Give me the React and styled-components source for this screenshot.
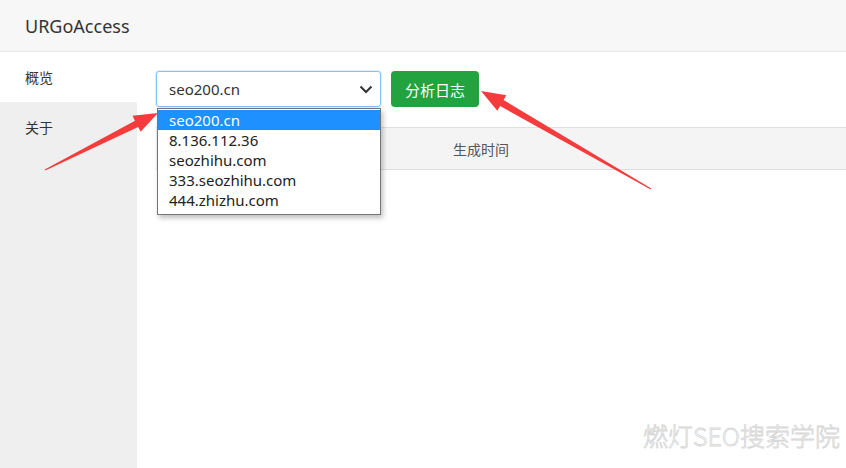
import React from 'react'
import styled, { createGlobalStyle } from 'styled-components'

const GlobalStyle = createGlobalStyle`
    html, body {
        margin: 0;
        padding: 0;
        background: #fff;
    }
    body {
        font-family: "Noto Sans", "Noto Sans CJK SC", sans-serif;
        color: #333;
    }
`

const Page = styled.div`
    position: relative;
    width: 846px;
    height: 468px;
    overflow: hidden;
    display: flex;
    flex-direction: column;
`
const TopBar = styled.header`
    height: 51px;
    flex-shrink: 0;
    background: #f7f7f7;
    border-bottom: 1px solid #e6e6e6;
    display: flex;
    align-items: center;
    padding-left: 25px;
    font-size: 18px;
    color: #333;
`
const Body = styled.div`
    flex: 1;
    display: flex;
`
const Sidebar = styled.nav`
    width: 137px;
    flex-shrink: 0;
    background: #efefef;
    display: flex;
    flex-direction: column;
`
const NavItem = styled.div`
    height: 50px;
    display: flex;
    align-items: center;
    padding-left: 25px;
    font-size: 14px;
    color: #333;
    background: ${p => (p.$active ? '#fff' : 'transparent')};
`
const Main = styled.main`
    flex: 1;
    padding: 19px 0 0 19px;
    display: flex;
    flex-direction: column;
`
const Toolbar = styled.div`
    display: flex;
    gap: 10px;
    align-items: flex-start;
`
const SelectWrap = styled.div`
    position: relative;
    width: 225px;
`
const SelectBox = styled.div`
    box-sizing: border-box;
    height: 36px;
    border: 1px solid #86c1f4;
    border-radius: 3px;
    box-shadow: 0 0 0 1px rgba(134, 193, 244, 0.25);
    display: flex;
    align-items: center;
    justify-content: space-between;
    padding: 0 6px 0 12px;
    font-size: 15px;
    color: #333;
`
const Dropdown = styled.ul`
    position: absolute;
    top: 37px;
    left: 1px;
    width: 224px;
    box-sizing: border-box;
    margin: 0;
    padding: 1px 0 4px;
    list-style: none;
    background: #fff;
    border: 1px solid #767676;
    box-shadow: 2px 3px 5px rgba(0, 0, 0, 0.25);
    z-index: 2;
`
const Option = styled.li`
    height: 20px;
    line-height: 20px;
    padding-left: 11px;
    font-size: 15px;
    color: ${p => (p.$selected ? '#fff' : '#222')};
    background: ${p => (p.$selected ? '#1e90ff' : 'transparent')};
`
const Button = styled.button`
    width: 88px;
    height: 36px;
    border: none;
    border-radius: 4px;
    background: #22a33f;
    color: #fff;
    font-family: inherit;
    font-size: 15px;
    cursor: pointer;
`
const TableHead = styled.div`
    margin-top: 20px;
    height: 41px;
    background: #f4f4f4;
    border-top: 1px solid #dedede;
    border-bottom: 1px solid #dedede;
    display: grid;
    grid-template-columns: 244px 162px 1fr;
    align-items: center;
    font-size: 14px;
    color: #555;
`
const Cell = styled.div`
    text-align: center;
`
const Overlay = styled.svg`
    position: absolute;
    inset: 0;
    pointer-events: none;
    z-index: 5;
`
const Watermark = styled.div`
    position: absolute;
    right: 6px;
    bottom: 15px;
    font-size: 25px;
    font-family: "Noto Sans CJK SC", sans-serif;
    font-weight: 300;
    color: #fff;
    -webkit-text-stroke: 0.8px #d6d6d6;
    letter-spacing: 0;
    z-index: 4;
`

const options = ['seo200.cn', '8.136.112.36', 'seozhihu.com', '333.seozhihu.com', '444.zhizhu.com']

// tapered annotation arrow from tail (x1,y1) to tip (x2,y2)
const arrowPoints = (x1, y1, x2, y2) => {
    const dx = x2 - x1
    const dy = y2 - y1
    const len = Math.hypot(dx, dy)
    const ux = dx / len
    const uy = dy / len
    const nx = -uy
    const ny = ux
    const bx = x2 - ux * 24
    const by = y2 - uy * 24
    const pts = [
        [x1 + nx * 0.6, y1 + ny * 0.6],
        [bx + nx * 3.5, by + ny * 3.5],
        [bx + nx * 9, by + ny * 9],
        [x2, y2],
        [bx - nx * 9, by - ny * 9],
        [bx - nx * 3.5, by - ny * 3.5],
        [x1 - nx * 0.6, y1 - ny * 0.6],
    ]
    return pts.map(p => p.join(',')).join(' ')
}

const App = () => {
  return (
      <Page>
        <GlobalStyle />
        <TopBar>URGoAccess</TopBar>
        <Body>
            <Sidebar>
                <NavItem $active>概览</NavItem>
                <NavItem>关于</NavItem>
            </Sidebar>
            <Main>
                <Toolbar>
                    <SelectWrap>
                        <SelectBox>
                            seo200.cn
                            <svg width="16" height="16" viewBox="0 0 16 16">
                                <polyline points="2.5,5.5 8,11 13.5,5.5" fill="none" stroke="#333" strokeWidth="2" />
                            </svg>
                        </SelectBox>
                        <Dropdown>
                            {options.map((o, i) => (
                                <Option key={o} $selected={i === 0}>{o}</Option>
                            ))}
                        </Dropdown>
                    </SelectWrap>
                    <Button>分析日志</Button>
                </Toolbar>
                <TableHead>
                    <Cell>站点</Cell>
                    <Cell>生成时间</Cell>
                    <Cell></Cell>
                </TableHead>
            </Main>
        </Body>

        <Overlay width="846" height="468">
            <polygon points={arrowPoints(45, 170, 158, 113)} fill="#f53b3b" />
            <polygon points={arrowPoints(651, 189, 481, 91)} fill="#f53b3b" />
        </Overlay>
        <Watermark>燃灯SEO搜索学院</Watermark>
      </Page>
  )
}

export default App
